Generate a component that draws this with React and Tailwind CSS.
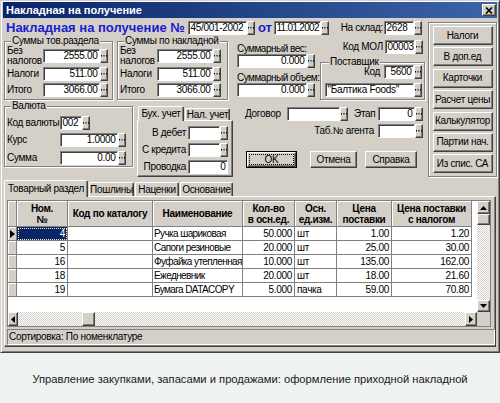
import React from "react";

const raised =
  "bg-[#d4d0c8] border border-t-white border-l-white border-r-[#404040] border-b-[#404040] shadow-[inset_-1px_-1px_0_#808080]";
const sunken =
  "bg-white border border-t-[#808080] border-l-[#808080] border-r-white border-b-white shadow-[inset_1px_1px_0_#404040]";
const hatch =
  "bg-[repeating-conic-gradient(#ffffff_0_25%,#d4d0c8_0_50%)] bg-[length:2px_2px]";

function Dots() {
  return (
    <span className={`${raised} w-[8px] h-[14px] flex items-center justify-center shrink-0`}>
      <svg width="6" height="2" viewBox="0 0 6 2">
        <rect x="0" y="0" width="1" height="1.5" fill="#000" />
        <rect x="2.5" y="0" width="1" height="1.5" fill="#000" />
        <rect x="5" y="0" width="1" height="1.5" fill="#000" />
      </svg>
    </span>
  );
}

function Field({ w, value = "", right = true, btn = true }) {
  return (
    <div className="flex shrink-0 h-[14px]">
      <div
        className={`${w} h-[14px] ${sunken} flex items-center px-[1.5px] leading-none whitespace-nowrap overflow-hidden ${
          right ? "justify-end" : "justify-start"
        }`}
      >
        {value}
      </div>
      {btn && <Dots />}
    </div>
  );
}

function Group({ title, className = "", children }) {
  return (
    <fieldset
      className={`border border-[#808080] shadow-[inset_1px_1px_0_#fff,1px_1px_0_#fff] ${className}`}
    >
      <legend className="ml-[4px] px-[1px] leading-[10px] bg-[#d4d0c8] whitespace-nowrap">{title}</legend>
      {children}
    </fieldset>
  );
}

function Button({ className = "", children }) {
  return (
    <div className={`${raised} flex items-center justify-center whitespace-nowrap ${className}`}>
      {children}
    </div>
  );
}

function SmallTab({ active, className = "", children }) {
  return (
    <div
      className={`bg-[#d4d0c8] border-t border-l border-r border-t-white border-l-white border-r-[#404040] rounded-t-[2px] shadow-[inset_-1px_0_0_#808080] flex items-center justify-center whitespace-nowrap shrink-0 ${
        active ? "relative z-10 -mb-[1px]" : ""
      } ${className}`}
    >
      {children}
    </div>
  );
}

const cols = [
  { t: ["Ном.", "№"] },
  { t: ["Код по каталогу"] },
  { t: ["Наименование"] },
  { t: ["Кол-во", "в осн.ед."] },
  { t: ["Осн.", "ед.изм."] },
  { t: ["Цена", "поставки"] },
  { t: ["Цена поставки", "с налогом"] },
];

const rows = [
  ["4", "", "Ручка шариковая", "50.000", "шт", "1.00", "1.20"],
  ["5", "", "Сапоги резиновые", "20.000", "шт", "25.00", "30.00"],
  ["16", "", "Фуфайка утепленная", "10.000", "шт", "135.00", "162.00"],
  ["18", "", "Ежедневник", "20.000", "шт", "18.00", "21.60"],
  ["19", "", "Бумага DATACOPY", "5.000", "пачка", "59.00", "70.80"],
];

const rightAligned = [true, false, false, true, false, true, true];

function Grid() {
  return (
    <div className="w-[484px] h-[127px] border border-[#808080] bg-white flex flex-col">
      <div className="flex h-[111px]">
        <div className="w-[469px] h-full">
          <div className="grid grid-cols-[9px_51px_85px_90px_52px_42px_55px_80px] grid-rows-[26px_repeat(5,14px)] w-[464px]">
            <div className="bg-[#d4d0c8] border-r border-b border-[#808080] shadow-[inset_1px_1px_0_#fff]" />
            {cols.map((c, i) => (
              <div
                key={i}
                className="bg-[#d4d0c8] border-r border-b border-[#808080] shadow-[inset_1px_1px_0_#fff] flex flex-col items-center justify-center text-center font-bold leading-[11px] whitespace-nowrap"
              >
                {c.t.map((l, j) => (
                  <span key={j}>{l}</span>
                ))}
              </div>
            ))}
            {rows.map((r, ri) => (
              <React.Fragment key={ri}>
                <div className="bg-[#d4d0c8] border-r border-b border-[#808080] shadow-[inset_1px_1px_0_#fff] flex items-center justify-center">
                  {ri === 0 && (
                    <svg width="5" height="8" viewBox="0 0 5 8">
                      <polygon points="0,0 5,4 0,8" fill="#000" />
                    </svg>
                  )}
                </div>
                {r.map((v, ci) => (
                  <div
                    key={ci}
                    className={`border-r border-b border-[#808080] flex items-center whitespace-nowrap overflow-hidden ${
                      rightAligned[ci] ? "justify-end" : "justify-start"
                    } ${ci === 2 ? "pl-[1px] tracking-[-0.6px]" : "px-[2px]"} ${
                      ri === 0 && ci === 0
                        ? "bg-[#0a246a] text-white outline outline-1 outline-dotted outline-[#ffff9a] -outline-offset-2"
                        : ""
                    }`}
                  >
                    {v}
                  </div>
                ))}
              </React.Fragment>
            ))}
          </div>
        </div>
        <div className="w-[13px] h-full flex flex-col">
          <div className={`${raised} h-[13px] flex items-center justify-center`}>
            <svg width="7" height="4" viewBox="0 0 7 4">
              <polygon points="3.5,0 7,4 0,4" fill="#000" />
            </svg>
          </div>
          <div className={`${raised} h-[11px]`} />
          <div className={`flex-1 ${hatch}`} />
          <div className={`${raised} h-[12px] flex items-center justify-center`}>
            <svg width="7" height="4" viewBox="0 0 7 4">
              <polygon points="0,0 7,0 3.5,4" fill="#000" />
            </svg>
          </div>
        </div>
      </div>
      <div className="flex h-[14px]">
        <div className="w-[469px] flex">
          <div className={`${raised} w-[10px] flex items-center justify-center`}>
            <svg width="4" height="7" viewBox="0 0 4 7">
              <polygon points="4,0 4,7 0,3.5" fill="#000" />
            </svg>
          </div>
          <div className={`w-[64px] ${hatch}`} />
          <div className={`${raised} w-[13px]`} />
          <div className={`flex-1 ${hatch}`} />
          <div className={`${raised} w-[12px] flex items-center justify-center`}>
            <svg width="4" height="7" viewBox="0 0 4 7">
              <polygon points="0,0 4,3.5 0,7" fill="#000" />
            </svg>
          </div>
        </div>
        <div className="w-[13px] bg-[#d4d0c8]" />
      </div>
    </div>
  );
}

export default function App() {
  return (
    <div className="w-[500px] h-[403px] bg-[#eef2f0] font-['Liberation_Sans',Arial,sans-serif] text-[10px] tracking-[-0.3px] text-black leading-[12px] overflow-hidden">
      {/* window */}
      <div className="w-[500px] h-[353px] bg-[#d4d0c8] border border-t-[#d4d0c8] border-l-[#d4d0c8] border-r-[#404040] border-b-[#404040] shadow-[inset_1px_1px_0_#fff,inset_-1px_-1px_0_#808080] px-[2px] pt-[1px]">
        <div className="h-[16px] flex items-center justify-between bg-linear-to-r from-[#0a246a] to-[#3d64a8] pl-[3px] pr-[1px]">
          <span className="text-white font-bold text-[11px] tracking-normal">Накладная на получение</span>
          <div className={`${raised} w-[14px] h-[12px] flex items-center justify-center`}>
            <svg width="8" height="7" viewBox="0 0 8 7">
              <path d="M1 0.5 L7 6.5 M7 0.5 L1 6.5" stroke="#000" strokeWidth="1.6" />
            </svg>
          </div>
        </div>

        <div className="pl-[1px]">
          {/* top section */}
          <div className="flex">
            <div className="w-[421px] flex flex-col">
              {/* row 1 */}
              <div className="h-[17px] flex items-end">
                <span className="ml-[2px] w-[182px] text-[13px] tracking-normal leading-[15px] font-bold text-[#1c1cd0] whitespace-nowrap">
                  Накладная на получение №
                </span>
                <Field w="w-[59px]" value="45/001-2002" right={false} />
                <span className="ml-[3px] w-[16px] text-[13px] tracking-normal leading-[15px] font-bold text-[#1c1cd0]">от</span>
                <Field w="w-[47px] tracking-[-0.7px]" value="11.01.2002" right={false} />
                <span className="w-[55px] text-right pr-[1px] self-center mt-[3px]">На склад:</span>
                <Field w="w-[30px]" value="2628" right={false} />
              </div>

              {/* block 2 */}
              <div className="mt-[1px] h-[64px] flex items-start">
                <Group title="Суммы тов.раздела" className="w-[109px] pl-[2px] pb-[2px]">
                  <div className="flex flex-col gap-[2px]">
                    <div className="flex items-center h-[19px]">
                      <span className="w-[36px] leading-[10px]">
                        Без
                        <br />
                        налогов
                      </span>
                      <Field w="w-[57px]" value="2555.00" />
                    </div>
                    <div className="flex items-center h-[14px]">
                      <span className="w-[36px]">Налоги</span>
                      <Field w="w-[57px]" value="511.00" />
                    </div>
                    <div className="flex items-center h-[14px]">
                      <span className="w-[36px]">Итого</span>
                      <Field w="w-[57px]" value="3066.00" />
                    </div>
                  </div>
                </Group>
                <Group title="Суммы по накладной" className="ml-[4px] w-[111px] pl-[2px] pb-[2px]">
                  <div className="flex flex-col gap-[2px]">
                    <div className="flex items-center h-[19px]">
                      <span className="w-[37px] leading-[10px]">
                        Без
                        <br />
                        налогов
                      </span>
                      <Field w="w-[56px]" value="2555.00" />
                    </div>
                    <div className="flex items-center h-[14px]">
                      <span className="w-[37px]">Налоги</span>
                      <Field w="w-[56px]" value="511.00" />
                    </div>
                    <div className="flex items-center h-[14px]">
                      <span className="w-[37px]">Итого</span>
                      <Field w="w-[56px]" value="3066.00" />
                    </div>
                  </div>
                </Group>
                <div className="ml-[8px] w-[80px] flex flex-col pl-[1px]">
                  <span className="mt-[7px] leading-[11px] whitespace-nowrap tracking-[-0.5px]">Суммарный вес:</span>
                  <Field w="w-[70px]" value="0.000" />
                  <span className="mt-[4px] leading-[11px] whitespace-nowrap tracking-[-0.5px]">Суммарный объем:</span>
                  <Field w="w-[70px]" value="0.000" />
                </div>
                <div className="ml-[4px] w-[105px] flex flex-col">
                  <div className="mt-[4px] h-[14px] flex items-center justify-end pr-[2px]">
                    <span className="mr-[2px] whitespace-nowrap">Код МОЛ</span>
                    <Field w="w-[30px]" value="00003" right={false} />
                  </div>
                  <Group title="Поставщик" className="mt-[3px] w-[105px] pl-[4px] pr-[2px] pb-[2px]">
                    <div className="-mt-[2px] h-[14px] flex items-center justify-end">
                      <span className="mr-[4px]">Код</span>
                      <Field w="w-[30px]" value="5600" />
                    </div>
                    <div className="mt-[4px]">
                      <Field w="w-[89px]" value={"\"Балтика Foods\""} right={false} />
                    </div>
                  </Group>
                </div>
              </div>

              {/* block 3 */}
              <div className="h-[77px] flex items-start">
                <Group title="Валюта" className="mt-[1px] w-[129px] pl-[2px] pb-[1px]">
                  <div className="mt-[5px] h-[14px] flex items-center">
                    <span className="w-[53px] whitespace-nowrap">Код валюты</span>
                    <Field w="w-[22px]" value="002" right={false} />
                  </div>
                  <div className="mt-[3px] h-[14px] flex items-center">
                    <span className="w-[53px]">Курс</span>
                    <Field w="w-[58px]" value="1.0000" />
                  </div>
                  <div className="mt-[4px] h-[14px] flex items-center">
                    <span className="w-[53px]">Сумма</span>
                    <Field w="w-[58px]" value="0.00" />
                  </div>
                </Group>

                <div className="ml-[4px] mt-[7px] w-[96px] flex flex-col">
                  <div className="h-[13px] flex items-end pl-[1px]">
                    <SmallTab active className="h-[15px] w-[46px]">
                      Бух. учет
                    </SmallTab>
                    <SmallTab className="h-[12px] w-[45px] ml-[1px]">Нал. учет</SmallTab>
                  </div>
                  <div className="h-[57px] border border-t-white border-l-white border-r-[#404040] border-b-[#404040] shadow-[inset_-1px_-1px_0_#808080] flex flex-col pt-[5px] gap-[3px]">
                    <div className="h-[14px] flex items-center">
                      <span className="w-[50px] text-right pr-[2px]">В дебет</span>
                      <Field w="w-[32px]" />
                    </div>
                    <div className="h-[14px] flex items-center">
                      <span className="w-[50px] text-right pr-[2px] whitespace-nowrap">С кредита</span>
                      <Field w="w-[32px]" />
                    </div>
                    <div className="h-[14px] flex items-center">
                      <span className="w-[50px] text-right pr-[2px]">Проводка</span>
                      <Field w="w-[40px]" value="0" btn={false} />
                    </div>
                  </div>
                </div>

                <div className="ml-[7px] w-[185px] flex flex-col">
                  <div className="mt-[7px] h-[14px] flex items-center">
                    <span className="ml-[5px] w-[42px]">Договор</span>
                    <Field w="w-[53px]" />
                    <span className="ml-[6px] w-[24px]">Этап</span>
                    <Field w="w-[37px]" value="0" />
                  </div>
                  <div className="mt-[3px] h-[14px] flex items-center justify-end pr-[2px]">
                    <span className="mr-[4px] whitespace-nowrap">Таб.№ агента</span>
                    <Field w="w-[37px]" />
                  </div>
                  <div className="mt-[13px] h-[17px] flex">
                    <div className="ml-[6px] w-[51px] border border-black flex">
                      <div className={`${raised} flex-1 flex p-[2px]`}>
                        <div className="flex-1 flex items-center justify-center outline outline-1 outline-dotted outline-black leading-[10px]">
                          OK
                        </div>
                      </div>
                    </div>
                    <Button className="ml-[13px] w-[47px]">Отмена</Button>
                    <Button className="ml-[8px] w-[52px]">Справка</Button>
                  </div>
                </div>
              </div>
            </div>

            {/* right button panel */}
            <div className="ml-[3px] mt-[4px] w-[69px] h-[155px] border border-[#808080] shadow-[inset_1px_1px_0_#fff,1px_1px_0_#fff] flex flex-col items-center pt-[3px] gap-[2.4px]">
              {["Налоги", "В доп.ед", "Карточки", "Расчет цены", "Калькулятор", "Партии нач.", "Из спис. СА"].map(
                (b) => (
                  <Button key={b} className="w-[60px] h-[19px]">
                    {b}
                  </Button>
                )
              )}
            </div>
          </div>

          {/* bottom tabs */}
          <div className="mt-[3px] w-[492px]">
            <div className="h-[16px] flex items-end">
              <SmallTab active className="h-[17px] w-[84px]">
                Товарный раздел
              </SmallTab>
              <SmallTab className="h-[14px] w-[45px] ml-[1px]">Пошлины</SmallTab>
              <SmallTab className="h-[14px] w-[44px] ml-[1px]">Наценки</SmallTab>
              <SmallTab className="h-[14px] w-[53px] ml-[1px]">Основание</SmallTab>
            </div>
            <div className="h-[151px] border border-t-white border-l-white border-r-[#404040] border-b-[#404040] shadow-[inset_-1px_-1px_0_#808080] px-[2px] pt-[3px]">
              <Grid />
              <div className="mt-[2px] w-[488px] h-[16px] border border-t-[#808080] border-l-[#808080] border-r-white border-b-white flex items-center pl-[1px] whitespace-nowrap">
                Сортировка: По номенклатуре
              </div>
            </div>
          </div>
        </div>
      </div>

      {/* caption */}
      <div className="pt-[19px] text-center text-[11.2px] tracking-normal leading-[14px] text-[#1a1a1a] whitespace-nowrap">
        Управление закупками, запасами и продажами: оформление приходной накладной
      </div>
    </div>
  );
}
